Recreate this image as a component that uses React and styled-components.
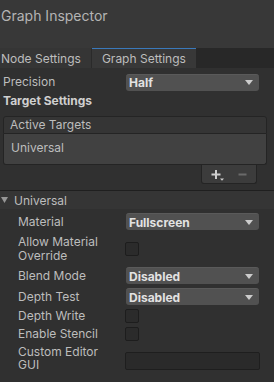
import React from "react";
import styled, { createGlobalStyle } from "styled-components";

const GlobalStyle = createGlobalStyle`
  html, body {
    margin: 0;
    padding: 0;
    background: #303030;
  }
  body {
    font-family: Inter, "Noto Sans", sans-serif;
    font-size: 12px;
    color: #bdbdbd;
  }
`;

const Panel = styled.div`
  width: 274px;
  height: 382px;
  overflow: hidden;
  background: #303030;
  display: flex;
  flex-direction: column;
`;

const Header = styled.div`
  height: 48px;
  background: #383838;
  box-sizing: border-box;
  padding: 6px 0 0 1px;
`;

const Title = styled.div`
  font-size: 14px;
  line-height: 19px;
  color: #b4b4b4;
`;

const TabBar = styled.div`
  height: 20px;
  display: flex;
  background: #282828;
`;

const Tab = styled.div`
  height: 20px;
  box-sizing: border-box;
  padding: ${(p) => (p.$first ? "0 10px 0 1px" : "0 10px")};
  background: ${(p) => (p.$active ? "#383838" : "#353535")};
  border-top: 1px solid ${(p) => (p.$active ? "#3a79bb" : "transparent")};
  line-height: 19px;
  color: #bdbdbd;
  border-right: ${(p) => (p.$first ? "1px solid #2a2a2a" : "none")};
`;

const Content = styled.div`
  display: flex;
  flex-direction: column;
  padding-top: 5px;
`;

const Row = styled.div`
  display: flex;
  align-items: center;
  height: ${(p) => p.$h || 18}px;
  padding-left: ${(p) => (p.$indent ? 18 : 3)}px;
`;

const Label = styled.div`
  width: ${(p) => (p.$indent ? 108 : 123)}px;
  padding-right: ${(p) => (p.$indent ? 8 : 0)}px;
  box-sizing: border-box;
  flex-shrink: 0;
  line-height: 13.5px;
  color: #bdbdbd;
`;

const BoldLabel = styled.div`
  font-weight: 700;
  color: #cfcfcf;
`;

const Dropdown = styled.div`
  width: 133px;
  height: 17px;
  box-sizing: border-box;
  background: #515151;
  border-radius: 3px;
  border-top: 1px solid #5a5a5a;
  display: flex;
  align-items: center;
  justify-content: space-between;
  padding: 0 6px 0 3px;
  font-weight: 700;
  color: #e2e2e2;
`;

const Arrow = styled.span`
  width: 0;
  height: 0;
  border-left: 4px solid transparent;
  border-right: 4px solid transparent;
  border-top: 5px solid #cccccc;
`;

const Checkbox = styled.div`
  width: 14px;
  height: 14px;
  box-sizing: border-box;
  margin-left: -1px;
  background: #2b2b2b;
  border: 1px solid #1d1d1d;
  border-radius: 2px;
`;

const TextField = styled.div`
  width: 135px;
  height: 18px;
  box-sizing: border-box;
  margin-left: -1px;
  margin-top: 5px;
  background: #2a2a2a;
  border: 1px solid #1e1e1e;
  border-radius: 2px;
`;

const List = styled.div`
  margin: 7px 7px 0 3px;
  display: flex;
  flex-direction: column;
`;

const ListHeader = styled.div`
  height: 18px;
  box-sizing: border-box;
  background: #353535;
  border: 1px solid #242424;
  border-radius: 3px 3px 0 0;
  padding-left: 6px;
  line-height: 16px;
  color: #bdbdbd;
`;

const ListBody = styled.div`
  height: 31px;
  box-sizing: border-box;
  background: #414141;
  border: 1px solid #242424;
  border-top: none;
  border-radius: 0 0 3px 3px;
  padding-left: 7px;
  line-height: 28px;
  color: #bdbdbd;
`;

const ListFooter = styled.div`
  align-self: flex-end;
  margin-right: 10px;
  width: 56px;
  height: 19px;
  box-sizing: border-box;
  background: #3c3c3c;
  border: 1px solid #242424;
  border-top: none;
  border-radius: 0 0 3px 3px;
  display: flex;
  align-items: center;
  gap: 13px;
  padding: 2px 0 0 9px;
`;

const IconButton = styled.span`
  display: flex;
  align-items: center;
`;

const Separator = styled.div`
  height: 1px;
  margin-top: 6px;
  background: #1f1f1f;
`;

const Foldout = styled.div`
  height: 18px;
  display: flex;
  align-items: center;
  gap: 6px;
  padding-left: 1px;
  background: #353535;
  color: #bdbdbd;
`;

const Section = styled.div`
  display: flex;
  flex-direction: column;
  padding-top: 2px;
`;

function DropdownField({ value }) {
  return (
    <Dropdown>
      <span>{value}</span>
      <Arrow />
    </Dropdown>
  );
}

const rows = [
  { label: "Material", kind: "dropdown", value: "Fullscreen", h: 21 },
  { label: "Allow Material Override", kind: "check", h: 33 },
  { label: "Blend Mode", kind: "dropdown", value: "Disabled", h: 21 },
  { label: "Depth Test", kind: "dropdown", value: "Disabled", h: 21 },
  { label: "Depth Write", kind: "check", h: 18 },
  { label: "Enable Stencil", kind: "check", h: 18 },
  { label: "Custom Editor GUI", kind: "text", h: 30 },
];

export default function App() {
  return (
    <>
      <GlobalStyle />
      <Panel>
        <Header>
          <Title>Graph Inspector</Title>
        </Header>
        <TabBar>
          <Tab $first>Node Settings</Tab>
          <Tab $active>Graph Settings</Tab>
        </TabBar>
        <Content>
          <Row>
            <Label>Precision</Label>
            <DropdownField value="Half" />
          </Row>
          <Row>
            <BoldLabel>Target Settings</BoldLabel>
          </Row>
          <List>
            <ListHeader>Active Targets</ListHeader>
            <ListBody>Universal</ListBody>
            <ListFooter>
              <IconButton>
                <svg width="14" height="12" viewBox="0 0 14 12">
                  <path d="M5 1v9M0.5 5.5h9" stroke="#cfcfcf" strokeWidth="2" />
                  <path d="M9 9.5h4l-2 2.2z" fill="#cfcfcf" />
                </svg>
              </IconButton>
              <IconButton>
                <svg width="9" height="12" viewBox="0 0 9 12">
                  <path d="M0.5 5.5h8" stroke="#6a6a6a" strokeWidth="2" />
                </svg>
              </IconButton>
            </ListFooter>
          </List>
          <Separator />
          <Foldout>
            <svg width="7" height="6" viewBox="0 0 7 6">
              <path d="M0 0h7L3.5 6z" fill="#969696" />
            </svg>
            <span>Universal</span>
          </Foldout>
          <Section>
            {rows.map((r) => (
              <Row key={r.label} $indent $h={r.h}>
                <Label $indent>{r.label}</Label>
                {r.kind === "dropdown" && <DropdownField value={r.value} />}
                {r.kind === "check" && <Checkbox />}
                {r.kind === "text" && <TextField />}
              </Row>
            ))}
          </Section>
        </Content>
      </Panel>
    </>
  );
}
